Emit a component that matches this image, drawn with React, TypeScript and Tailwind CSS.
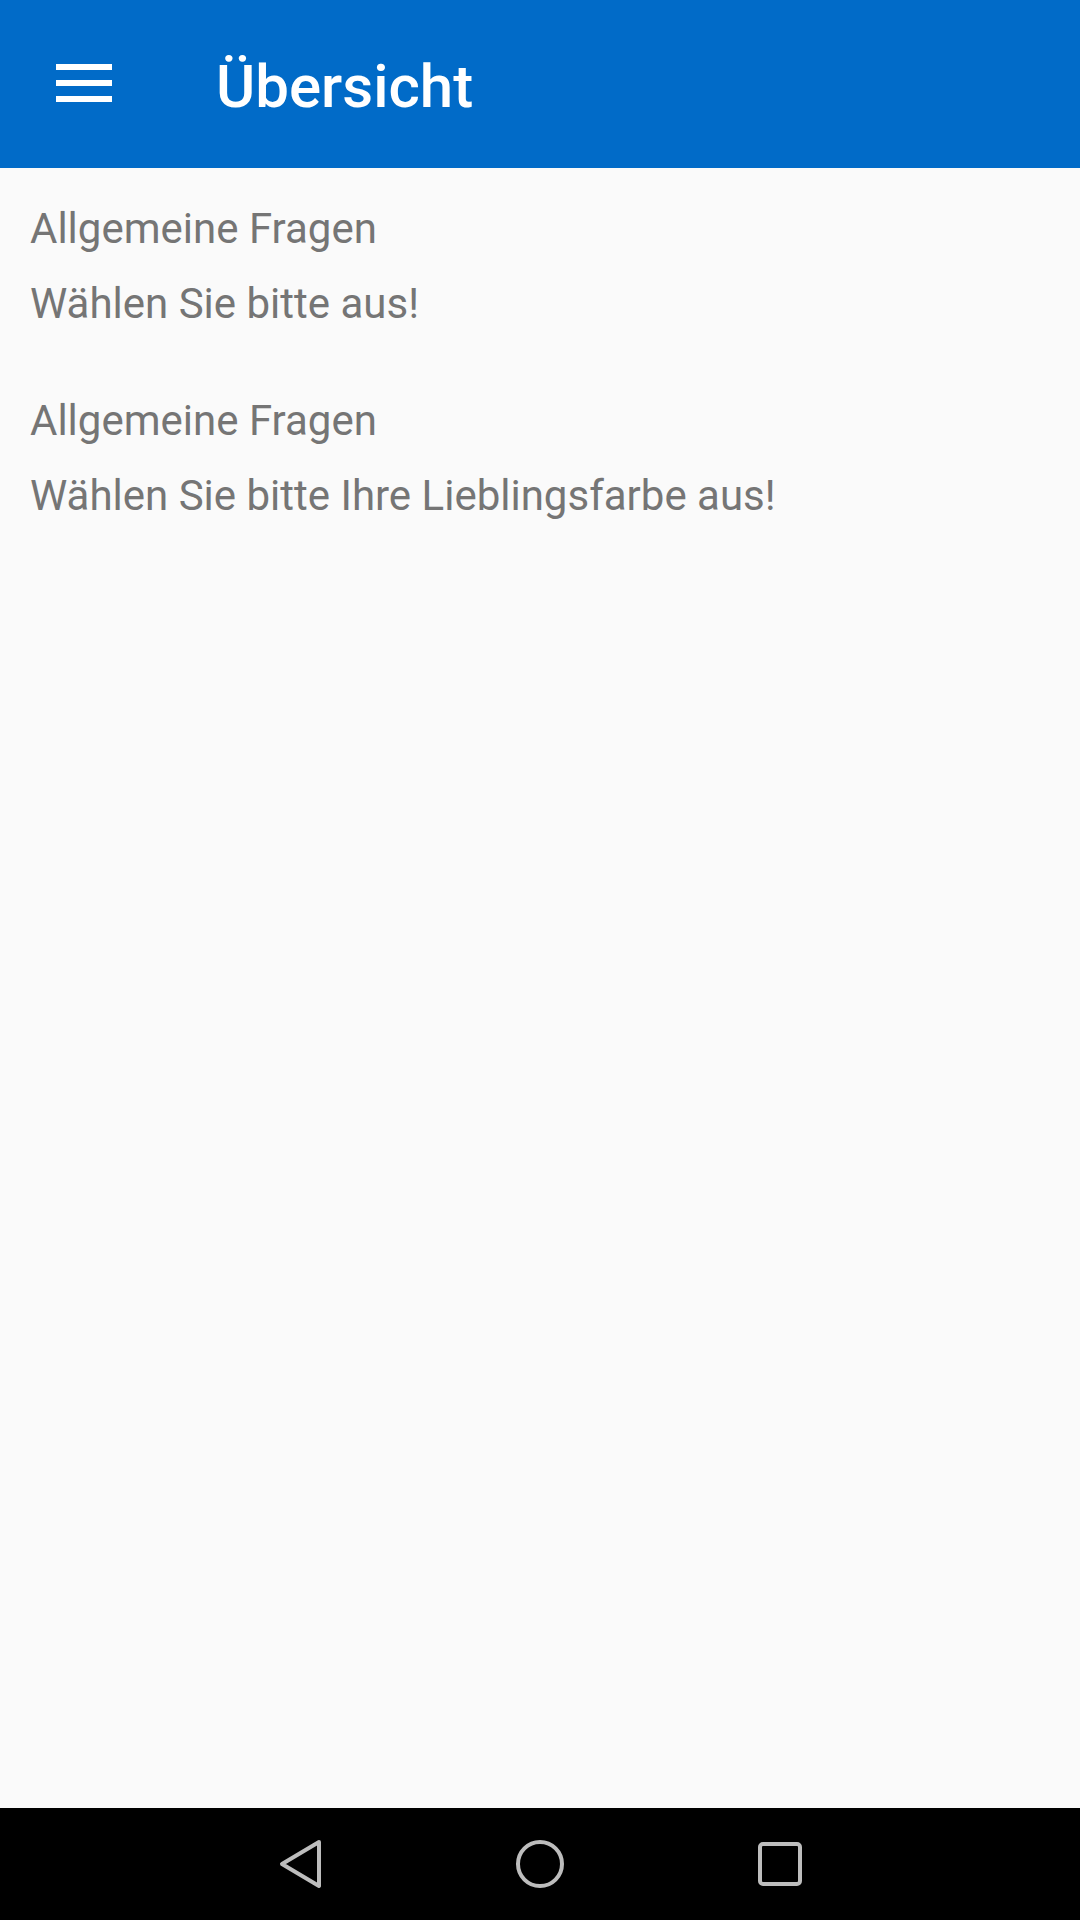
export default function App() {
  const questions = [
    { category: "Allgemeine Fragen", text: "Wählen Sie bitte aus!" },
    { category: "Allgemeine Fragen", text: "Wählen Sie bitte Ihre Lieblingsfarbe aus!" },
  ];

  return (
    <div className="flex h-[1920px] w-[1080px] flex-col bg-[#fafafa] font-['Roboto',sans-serif]">
      {/* Toolbar */}
      <header className="flex h-[168px] shrink-0 items-start bg-[#016bc8] pl-[56px]">
        <div className="mt-[64px] flex w-[56px] flex-col gap-[10px]">
          <span className="block h-[6px] w-full bg-white" />
          <span className="block h-[6px] w-full bg-white" />
          <span className="block h-[6px] w-full bg-white" />
        </div>
        <h1 className="ml-[104px] mt-[52px] text-[60px] font-medium leading-[70px] text-white">
          Übersicht
        </h1>
      </header>

      {/* Question list */}
      <main className="flex flex-1 flex-col gap-[42px] pl-[30px] pt-[23px]">
        {questions.map((q, i) => (
          <div key={i} className="flex flex-col text-[42px] leading-[75px] text-[#757575]">
            <span>{q.category}</span>
            <span>{q.text}</span>
          </div>
        ))}
      </main>

      {/* Android navigation bar */}
      <nav className="flex h-[112px] shrink-0 items-center justify-center bg-black">
        <div className="flex w-[240px] justify-center">
          <svg width="48" height="52" viewBox="0 0 48 52" fill="none">
            <path
              d="M43 4 L6 26 L43 48 Z"
              stroke="#bdbdbd"
              strokeWidth="4"
              strokeLinejoin="round"
            />
          </svg>
        </div>
        <div className="flex w-[240px] justify-center">
          <svg width="52" height="52" viewBox="0 0 52 52" fill="none">
            <circle cx="26" cy="26" r="22" stroke="#bdbdbd" strokeWidth="4" />
          </svg>
        </div>
        <div className="flex w-[240px] justify-center">
          <svg width="48" height="48" viewBox="0 0 48 48" fill="none">
            <rect x="4" y="4" width="40" height="40" rx="3" stroke="#bdbdbd" strokeWidth="4" />
          </svg>
        </div>
      </nav>
    </div>
  );
}
